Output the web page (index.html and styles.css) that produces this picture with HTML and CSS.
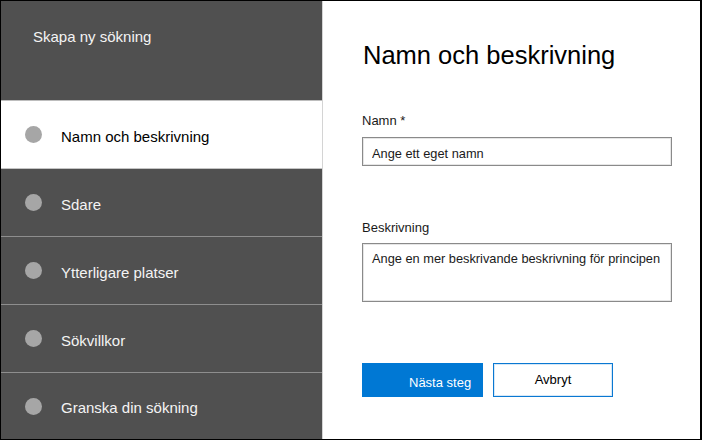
FILE: index.html
```html
<!DOCTYPE html>
<html lang="sv">
<head>
<meta charset="utf-8">
<title>Skapa ny sökning</title>
<link rel="stylesheet" href="styles.css">
</head>
<body>
<div class="app">
  <nav class="sidebar">
    <div class="side-header">Skapa ny sökning</div>
    <ul class="steps">
      <li class="step active"><span class="dot"></span><span class="step-label">Namn och beskrivning</span></li>
      <li class="step"><span class="dot"></span><span class="step-label">Sdare</span></li>
      <li class="step"><span class="dot"></span><span class="step-label">Ytterligare platser</span></li>
      <li class="step"><span class="dot"></span><span class="step-label">Sökvillkor</span></li>
      <li class="step last"><span class="dot"></span><span class="step-label">Granska din sökning</span></li>
    </ul>
  </nav>
  <main class="main">
    <h1 class="title">Namn och beskrivning</h1>
    <label class="label label-name" for="name">Namn *</label>
    <input class="field" id="name" type="text" placeholder="Ange ett eget namn">
    <label class="label label-desc" for="desc">Beskrivning</label>
    <textarea class="field area" id="desc" placeholder="Ange en mer beskrivande beskrivning för principen"></textarea>
    <div class="actions">
      <button class="btn primary" type="button">Nästa steg</button>
      <button class="btn secondary" type="button">Avbryt</button>
    </div>
  </main>
</div>
</body>
</html>
```
FILE: styles.css
```css
html, body {
  margin: 0;
  padding: 0;
  background: #ffffff;
}

body {
  font-family: "Liberation Sans", Arial, sans-serif;
}

.app {
  width: 702px;
  height: 440px;
  box-sizing: border-box;
  border: 1px solid #000;
  border-right-width: 2px;
  display: flex;
  overflow: hidden;
}

.sidebar {
  width: 322px;
  flex: none;
  box-sizing: border-box;
  border-right: 1px solid #d4d4d4;
  background: #505050;
  display: flex;
  flex-direction: column;
}

.side-header {
  height: 100px;
  flex: none;
  box-sizing: border-box;
  padding: 27px 0 0 32px;
  border-bottom: 1px solid #bdbdbd;
  color: #f4f4f4;
  font-size: 15px;
  line-height: 17px;
}

.steps {
  list-style: none;
  margin: 0;
  padding: 0;
  flex: 1;
  display: flex;
  flex-direction: column;
}

.step {
  height: 68px;
  box-sizing: border-box;
  flex: none;
  border-bottom: 1px solid #8e8e8e;
  display: flex;
  align-items: center;
  padding-left: 24px;
  gap: 19px;
  color: #f4f4f4;
  font-size: 15px;
  line-height: 17px;
}

.step.last {
  flex: 1;
  border-bottom: none;
}

.step.active {
  background: #ffffff;
  color: #000;
  border-bottom-color: #c4c4c4;
}

.step-label {
  padding-top: 3px;
}

.dot {
  width: 17px;
  height: 17px;
  border-radius: 50%;
  background: #a6a6a6;
  flex: none;
}

.main {
  flex: 1;
  padding: 39px 0 0 39px;
  display: flex;
  flex-direction: column;
  align-items: flex-start;
}

.title {
  margin: 0 0 0 1px;
  font-size: 25.5px;
  font-weight: normal;
  line-height: 30px;
  color: #000;
}

.label {
  display: block;
  font-size: 13px;
  line-height: 16px;
  color: #1a1a1a;
}

.label-name {
  margin-top: 43px;
}

.label-desc {
  margin-top: 54px;
}

.field {
  display: block;
  width: 310px;
  box-sizing: border-box;
  margin: 8px 0 0 0;
  border: 1px solid #8a8a8a;
  box-shadow: inset 0 0 0 1px #e6e6e6;
  background: #fff;
  font-family: "Liberation Sans", Arial, sans-serif;
  font-size: 12.8px;
  color: #000;
  outline: none;
}

input.field {
  height: 29px;
  padding: 4px 0 0 9px;
}

.area {
  height: 59px;
  margin-top: 7px;
  padding: 7px 0 0 9px;
  line-height: 16px;
  resize: none;
  overflow: hidden;
}

.field::placeholder {
  color: #1a1a1a;
  opacity: 1;
}

.actions {
  display: flex;
  gap: 10px;
  margin-top: 61px;
}

.btn {
  height: 34px;
  box-sizing: border-box;
  font-family: "Liberation Sans", Arial, sans-serif;
  font-size: 13px;
  cursor: pointer;
  margin: 0;
}

.primary {
  width: 121px;
  background: #0078d4;
  border: none;
  color: #fff;
  text-align: left;
  padding: 4px 0 0 47px;
}

.secondary {
  width: 120px;
  background: #fff;
  border: 1px solid #0a78d2;
  box-shadow: inset 0 0 0 1px #d6e8f7;
  color: #000;
  padding: 0 0 2px 0;
}
```
